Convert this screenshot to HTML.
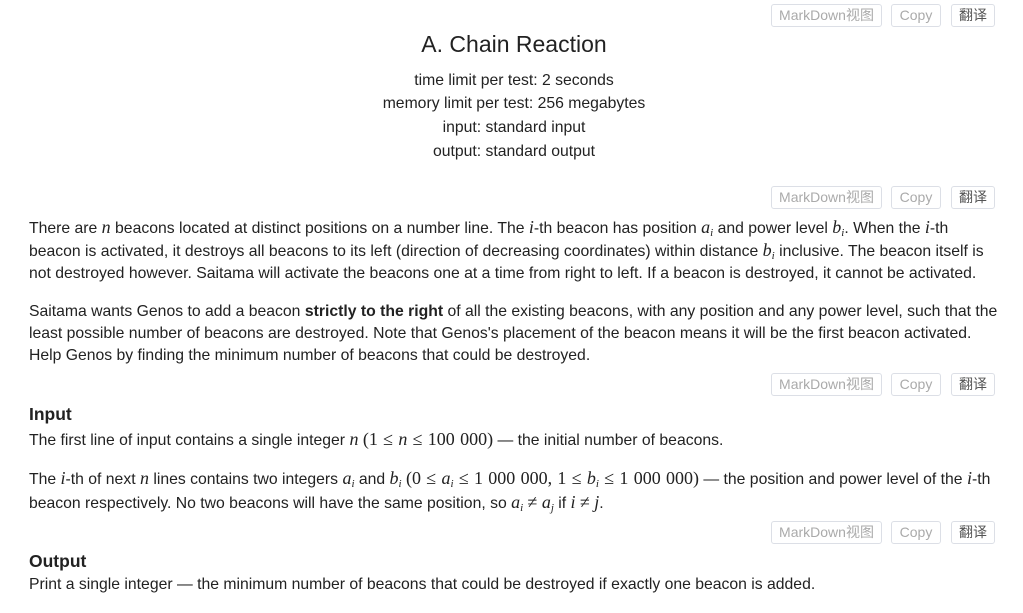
<!DOCTYPE html>
<html><head><meta charset="utf-8"><style>
body{margin:0;width:1023px;height:613px;background:#fff;position:relative;overflow:hidden;font-family:"Liberation Sans",Arial,sans-serif;color:#222;font-size:15.75px}
.l{position:absolute;left:29px;white-space:nowrap;line-height:23px;height:23px}
.c{position:absolute;left:0;width:1028px;text-align:center;line-height:23px}
i{font-family:"Liberation Serif",serif;font-size:18px}
.m{font-family:"Liberation Serif",serif;font-size:18px;word-spacing:0.8px}
sub{font-size:11px;font-family:"Liberation Serif",serif;font-style:italic;vertical-align:-3px;line-height:0}
.b{position:absolute;height:21px;border:1px solid #dcdfe6;border-radius:3px;font-size:14px;line-height:21px;text-align:center;color:#aaa;font-family:"Liberation Sans","Noto Sans CJK SC",sans-serif}
h{font-weight:bold;font-size:17.5px}
</style></head><body>
<div class="c" style="top:30px;font-size:23px;line-height:28px">A. Chain Reaction</div>
<div class="c" style="top:69px">time limit per test: 2 seconds</div>
<div class="c" style="top:92px">memory limit per test: 256 megabytes</div>
<div class="c" style="top:116px">input: standard input</div>
<div class="c" style="top:140px">output: standard output</div>

<div class="l" style="top:216px">There are <i>n</i> beacons located at distinct positions on a number line. The <i>i</i>-th beacon has position <i>a</i><sub>i</sub> and power level <i>b</i><sub>i</sub>. When the <i>i</i>-th</div>
<div class="l" style="top:239px">beacon is activated, it destroys all beacons to its left (direction of decreasing coordinates) within distance <i>b</i><sub>i</sub> inclusive. The beacon itself is</div>
<div class="l" style="top:262px">not destroyed however. Saitama will activate the beacons one at a time from right to left. If a beacon is destroyed, it cannot be activated.</div>

<div class="l" style="top:300px">Saitama wants Genos to add a beacon <b>strictly to the right</b> of all the existing beacons, with any position and any power level, such that the</div>
<div class="l" style="top:322px">least possible number of beacons are destroyed. Note that Genos's placement of the beacon means it will be the first beacon activated.</div>
<div class="l" style="top:344px">Help Genos by finding the minimum number of beacons that could be destroyed.</div>

<div class="l" style="top:403px"><h>Input</h></div>
<div class="l" style="top:428px">The first line of input contains a single integer <i>n</i> <span class="m">(1 ≤ <i>n</i> ≤ 100 000)</span> — the initial number of beacons.</div>
<div class="l" style="top:467px">The <i>i</i>-th of next <i>n</i> lines contains two integers <i>a</i><sub>i</sub> and <i>b</i><sub>i</sub> <span class="m">(0 ≤ <i>a</i><sub>i</sub> ≤ 1 000 000, 1 ≤ <i>b</i><sub>i</sub> ≤ 1 000 000)</span> — the position and power level of the <i>i</i>-th</div>
<div class="l" style="top:491px">beacon respectively. No two beacons will have the same position, so <i>a</i><sub>i</sub> <span class="m">≠</span> <i>a</i><sub>j</sub> if <i>i</i> <span class="m">≠</span> <i>j</i>.</div>

<div class="l" style="top:550px"><h>Output</h></div>
<div class="l" style="top:573px">Print a single integer — the minimum number of beacons that could be destroyed if exactly one beacon is added.</div>

<div class="b" style="left:771px;top:4px;width:109px">MarkDown视图</div>
<div class="b" style="left:891px;top:4px;width:48px">Copy</div>
<div class="b" style="left:951px;top:4px;width:42px;color:#555">翻译</div>
<div class="b" style="left:771px;top:186px;width:109px">MarkDown视图</div>
<div class="b" style="left:891px;top:186px;width:48px">Copy</div>
<div class="b" style="left:951px;top:186px;width:42px;color:#555">翻译</div>
<div class="b" style="left:771px;top:373px;width:109px">MarkDown视图</div>
<div class="b" style="left:891px;top:373px;width:48px">Copy</div>
<div class="b" style="left:951px;top:373px;width:42px;color:#555">翻译</div>
<div class="b" style="left:771px;top:521px;width:109px">MarkDown视图</div>
<div class="b" style="left:891px;top:521px;width:48px">Copy</div>
<div class="b" style="left:951px;top:521px;width:42px;color:#555">翻译</div>
</body></html>
